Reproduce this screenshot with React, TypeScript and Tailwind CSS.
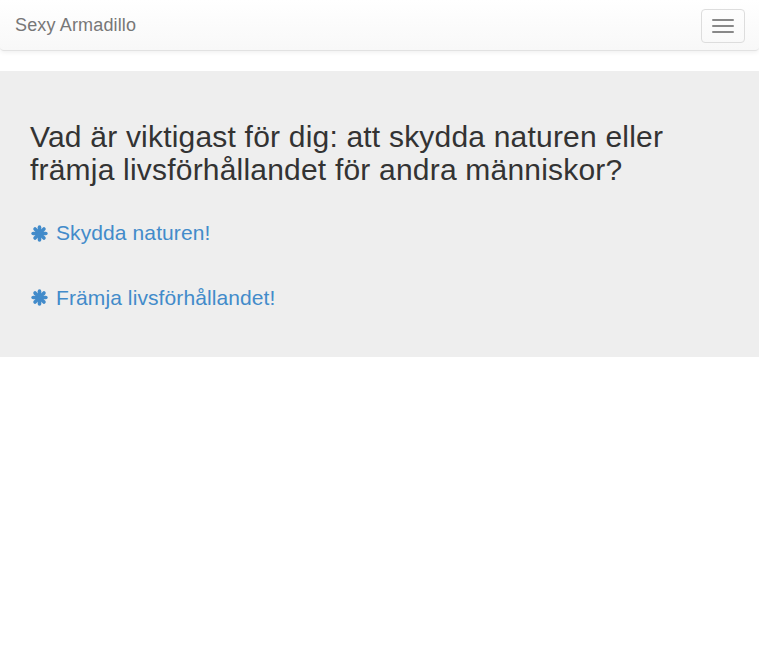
const Asterisk = () => (
  <svg
    viewBox="0 0 16 16"
    className="w-[17px] h-[17px] shrink-0 ml-[1px]"
    fill="none"
    stroke="currentColor"
    strokeWidth="3.4"
    strokeLinecap="round"
    aria-hidden="true"
  >
    <path d="M8 2v12" />
    <path d="M2 8h12" />
    <path d="M3.8 3.8l8.4 8.4" />
    <path d="M12.2 3.8l-8.4 8.4" />
  </svg>
);

const answers = ['Skydda naturen!', 'Främja livsförhållandet!'];

export default function App() {
  return (
    <div className="min-h-[660px] bg-white font-['Liberation_Sans',Arial,sans-serif]">
      {/* Navbar */}
      <nav className="h-[51px] border-b border-[#e2e2e2] rounded-b-[4px] bg-gradient-to-b from-white to-[#f8f8f8] shadow-[0_1px_5px_rgba(0,0,0,0.075)] flex items-center justify-between pl-[15px] pr-[14px]">
        <a href="#" className="text-[18px] leading-[20px] tracking-[0.15px] text-[#777] pb-[1px]">
          Sexy Armadillo
        </a>
        <button
          className="w-[44px] h-[34px] border border-[#ddd] rounded-[4px] flex flex-col items-center justify-center gap-[4px] mt-[1px]"
          aria-label="Toggle navigation"
        >
          <span className="block w-[22px] h-[2px] rounded-[1px] bg-[#888]" />
          <span className="block w-[22px] h-[2px] rounded-[1px] bg-[#888]" />
          <span className="block w-[22px] h-[2px] rounded-[1px] bg-[#888]" />
        </button>
      </nav>

      {/* Jumbotron */}
      <div className="mt-[20px] bg-[#eee] px-[30px] pt-[49px] pb-[43px]">
        <h2 className="text-[30px] leading-[33px] tracking-[0.2px] text-[#333]">
          Vad är viktigast för dig: att skydda naturen eller
          <br />
          främja livsförhållandet för andra människor?
        </h2>
        <div className="mt-[32px] flex flex-col gap-[33px]">
          {answers.map((a) => (
            <p key={a} className="text-[21px] leading-[30px] tracking-[0.1px]">
              <a href="#" className="text-[#428bca] inline-flex items-center gap-[8px]">
                <Asterisk />
                {a}
              </a>
            </p>
          ))}
        </div>
      </div>
    </div>
  );
}
